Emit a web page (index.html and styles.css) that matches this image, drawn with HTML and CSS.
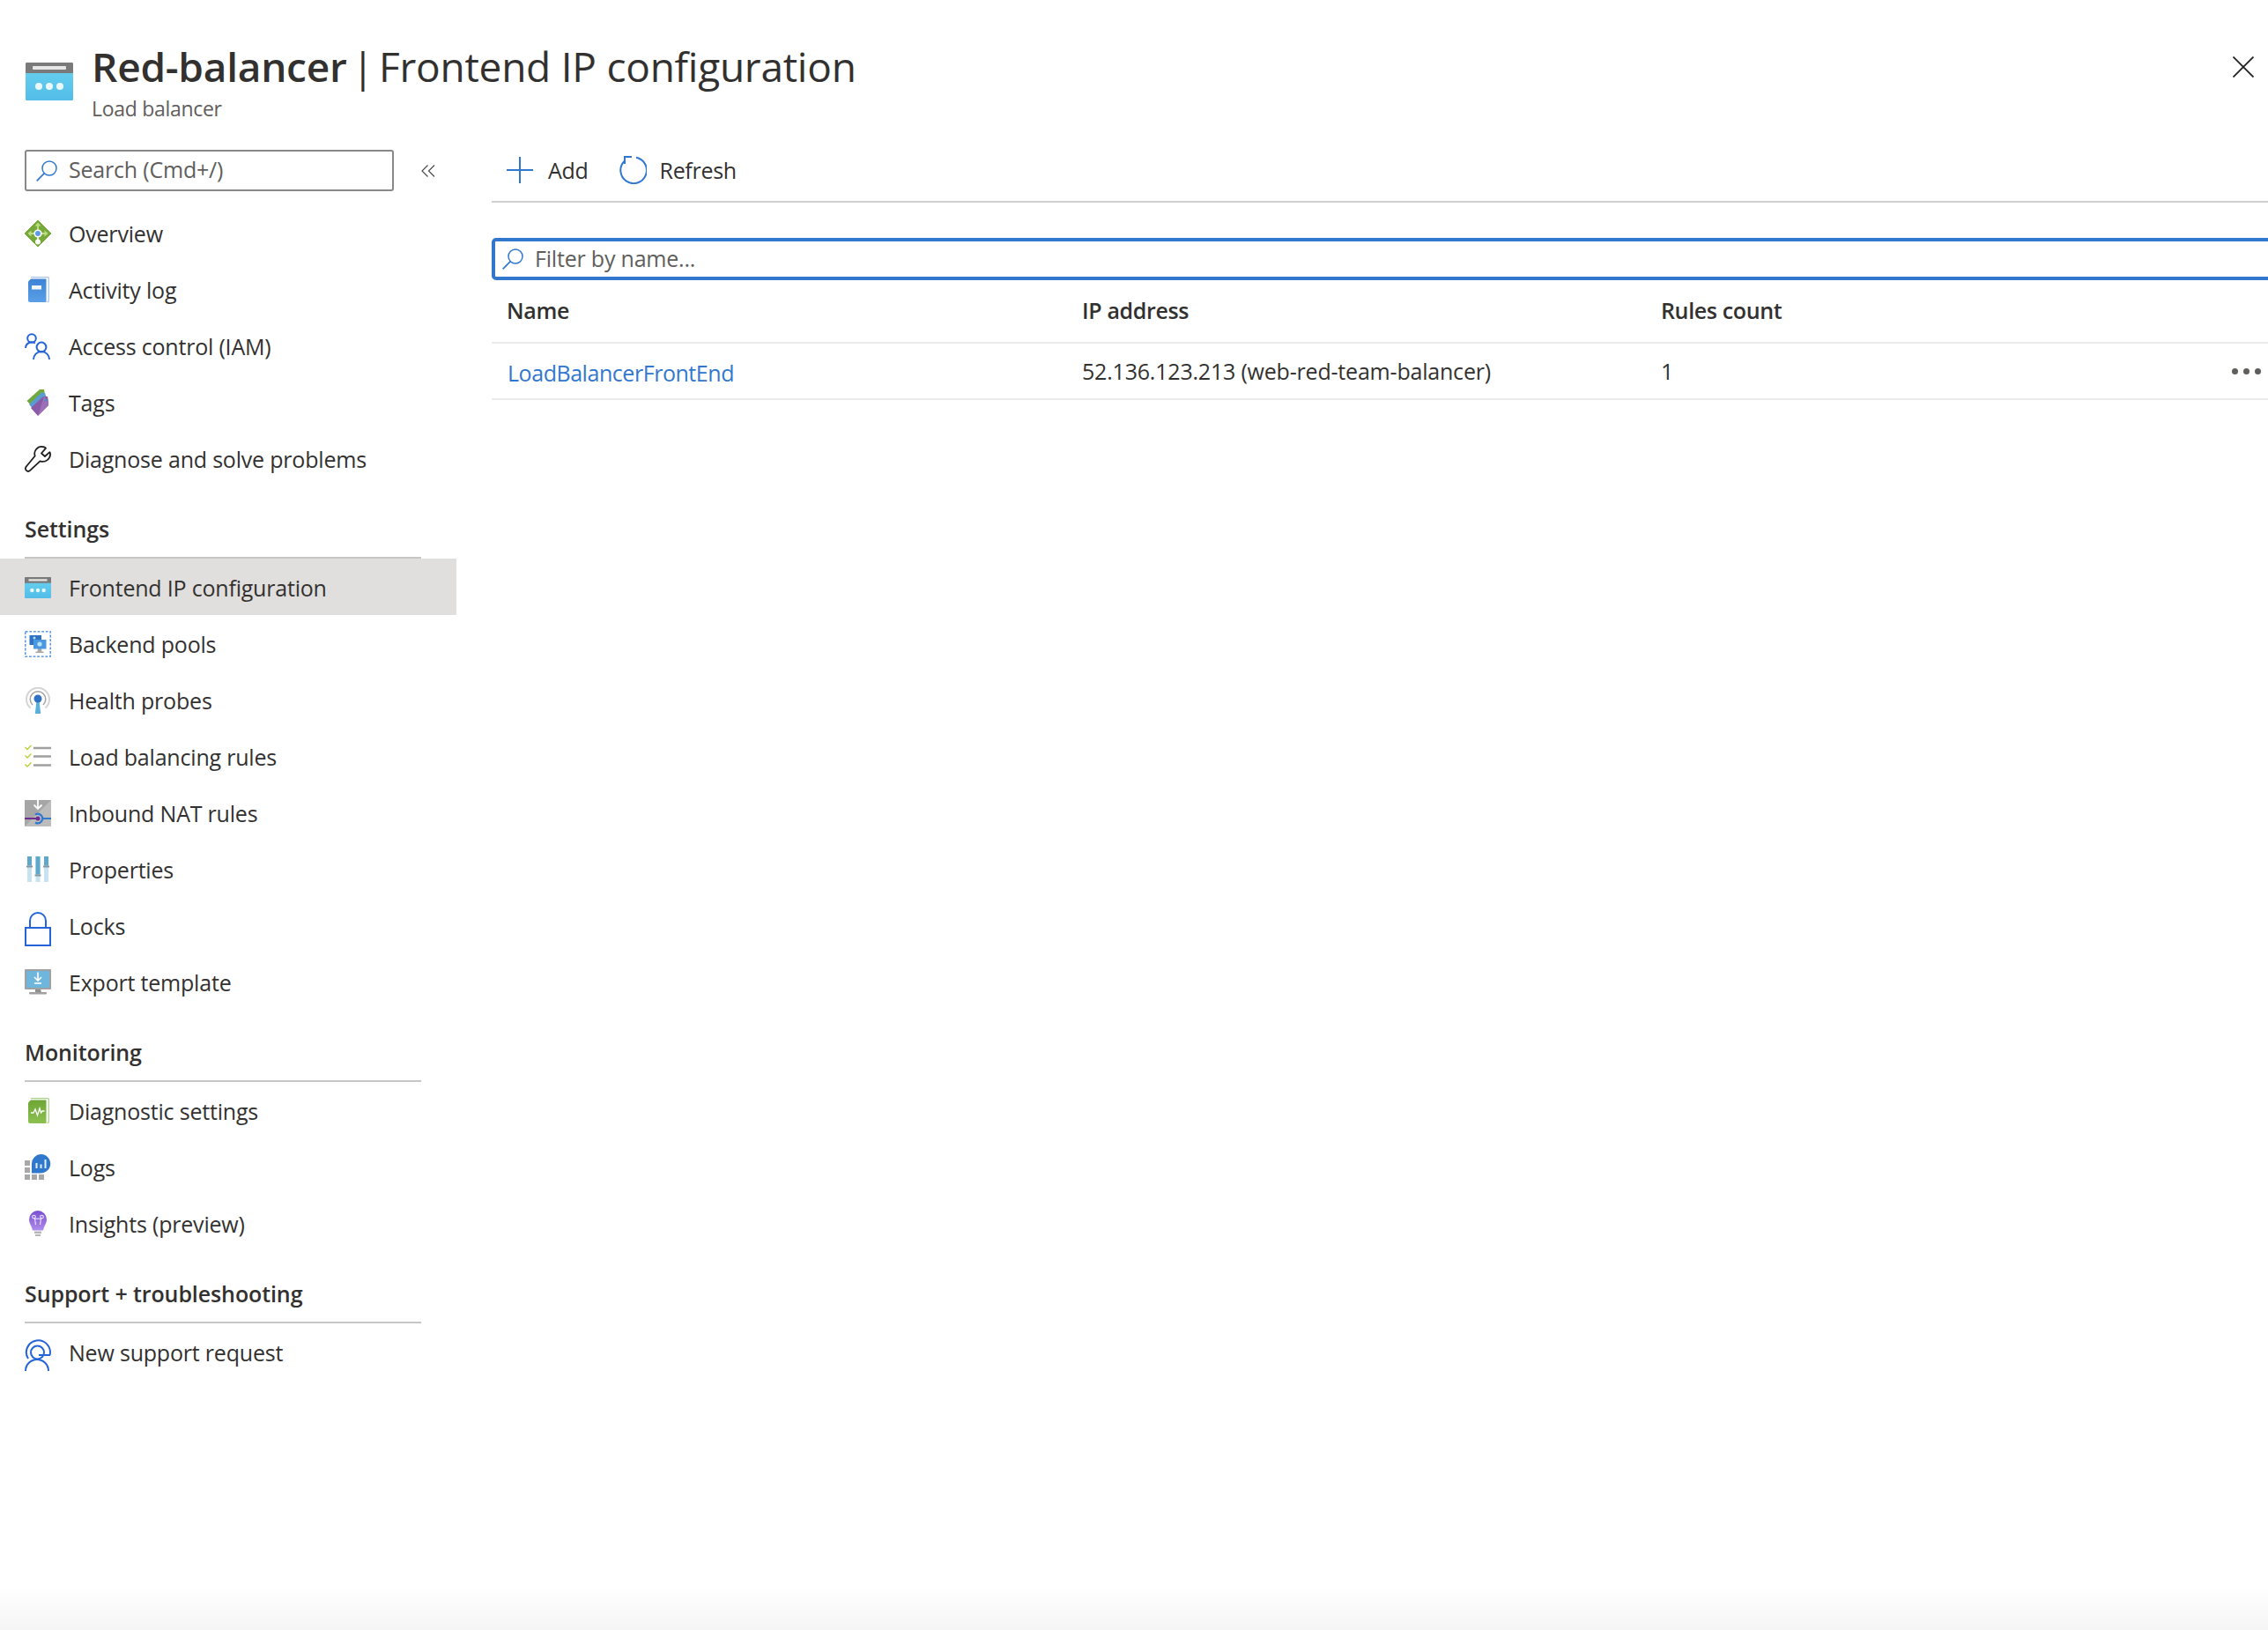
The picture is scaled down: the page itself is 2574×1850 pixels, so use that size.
FILE: index.html
```html
<!DOCTYPE html>
<html lang="en">
<head>
    <meta charset="UTF-8">
    <title>Red-balancer | Frontend IP configuration</title>
    <link rel="stylesheet" href="styles.css">
</head>
<body>
    <svg class="defs" width="0" height="0">
        <defs>
            <linearGradient id="skyGrad" x1="0" y1="0" x2="0" y2="1">
                <stop offset="0" stop-color="#6bd3f0"/>
                <stop offset="1" stop-color="#52bde8"/>
            </linearGradient>
            <linearGradient id="bookGrad" x1="0" y1="0" x2="0" y2="1">
                <stop offset="0" stop-color="#3d83d6"/>
                <stop offset="1" stop-color="#5a9fe6"/>
            </linearGradient>
            <linearGradient id="greenGrad" x1="0" y1="0" x2="0" y2="1">
                <stop offset="0" stop-color="#6ea534"/>
                <stop offset="1" stop-color="#8cc152"/>
            </linearGradient>
            <linearGradient id="bulbGrad" x1="0" y1="0" x2="0" y2="1">
                <stop offset="0" stop-color="#7a4fd0"/>
                <stop offset="1" stop-color="#ae8cec"/>
            </linearGradient>
            <symbol id="lbIcon" viewBox="0 0 54 43">
                <rect width="54" height="43" rx="1.5" fill="url(#skyGrad)"/>
                <path d="M1.5 0h51a1.5 1.5 0 0 1 1.500 1.500V12H0V1.500A1.500 1.500 0 0 1 1.500 0z" fill="#7a7a7a"/>
                <rect x="8" y="4" width="38" height="4" rx="1" fill="#e6e6e6"/>
                <circle cx="15" cy="27" r="4" fill="#e8f8fd"/>
                <circle cx="27" cy="27" r="4" fill="#e8f8fd"/>
                <circle cx="39" cy="27" r="4" fill="#e8f8fd"/>
            </symbol>
            <symbol id="searchIcon" viewBox="0 0 24 24">
                <circle cx="15" cy="9" r="8" fill="none" stroke="#3277ce" stroke-width="1.500"/>
                <path d="M9.300 14.700L.7 23.300" fill="none" stroke="#3277ce" stroke-width="1.700"/>
            </symbol>
        </defs>
    </svg>

    <div class="blade">
        <header class="blade-header">
            <svg class="resource-icon"><use href="#lbIcon"/></svg>
            <div class="blade-titles">
                <h1><strong>Red-balancer</strong> | <span>Frontend IP configuration</span></h1>
                <p>Load balancer</p>
            </div>
            <svg class="close-icon" viewBox="0 0 24 24"><path d="M.5.500l23 23M23.500.500l-23 23" fill="none" stroke="#201f1e" stroke-width="1.800"/></svg>
        </header>

        <div class="blade-body">
            <nav class="sidebar">
                <div class="side-search">
                    <div class="search-box">
                        <svg class="search-icon"><use href="#searchIcon"/></svg>
                        <span>Search (Cmd+/)</span>
                    </div>
                    <svg class="collapse-icon" viewBox="0 0 16 14"><path d="M7.500.500L1 7l6.500 6.500M15 .500L8.500 7l6.500 6.500" fill="none" stroke="#444" stroke-width="1.100"/></svg>
                </div>

                <a class="nav-item" href="#">
                    <svg class="nav-icon" viewBox="0 0 30 30">
                        <path d="M15 0l15 15-15 15L0 15z" fill="#76a83a" stroke="#76a83a" stroke-linejoin="round"/>
                        <path d="M15 2.500l3.500 4h-2.500v5h-2v-5h-2.500zM3.500 15l4-3.500v2.500h5v2h-5v2.500zM26.500 15l-4 3.500v-2.500h-5v-2h5v-2.500z" fill="#bcdc84"/>
                        <path d="M15 19v3" stroke="#fff" stroke-width="1.600"/>
                        <circle cx="15" cy="15" r="4.600" fill="#fff"/>
                        <circle cx="15" cy="15" r="3" fill="#5b9be8"/>
                        <circle cx="15" cy="24.500" r="3" fill="#fff"/>
                    </svg>
                    <span>Overview</span>
                </a>
                <a class="nav-item" href="#">
                    <svg class="nav-icon" viewBox="0 0 30 30">
                        <path d="M7 .7h19.500a.8.800 0 0 1 .8.800v26a.8.800 0 0 1-.8.800h-1" fill="none" stroke="#a9c4e6" stroke-width="1.200"/>
                        <path d="M7 2.500h17.500V29H6a2 2 0 0 1-2-2V5.500z" fill="url(#bookGrad)"/>
                        <rect x="8" y="10" width="11" height="4.500" fill="#f2f7fc"/>
                    </svg>
                    <span>Activity log</span>
                </a>
                <a class="nav-item" href="#">
                    <svg class="nav-icon" viewBox="0 0 30 30">
                        <g fill="none" stroke="#2464d8" stroke-width="2">
                            <circle cx="8" cy="6" r="4.800"/>
                            <path d="M1 17a7 7 0 0 1 11-5.500"/>
                            <circle cx="19" cy="16" r="5.400"/>
                            <path d="M10 30a9 9 0 0 1 18 0"/>
                        </g>
                    </svg>
                    <span>Access control (IAM)</span>
                </a>
                <a class="nav-item" href="#">
                    <svg class="nav-icon" viewBox="0 0 30 30">
                        <path d="M2.500 13L17 0h5l1 6-13 15z" fill="#70a83b"/>
                        <path d="M5 17L19 3.500l4 .5 2 6-13 15z" fill="#5a9bd1"/>
                        <path d="M7 21L21 8l5 0 1 6v4L15 30z" fill="#8a5aa6"/>
                        <path d="M15 30l12-12v-4l-5-6z" fill="#9d6fb8"/>
                        <circle cx="24" cy="12" r="1.500" fill="#3f8fc4"/>
                    </svg>
                    <span>Tags</span>
                </a>
                <a class="nav-item" href="#">
                    <svg class="nav-icon" viewBox="0 0 30 30">
                        <path d="M20 1a8 8 0 0 0-8.300 10.500L1.800 23.500a3 3 0 0 0 4.400 4.400L17.500 17.300A8.500 8.500 0 0 0 29 8.500l-.6-1.300L23 12l-4-3.500 5-5.800-1-.9A8 8 0 0 0 20 1z" fill="none" stroke="#201f1e" stroke-width="1.800" stroke-linejoin="round"/>
                    </svg>
                    <span>Diagnose and solve problems</span>
                </a>

                <h2 class="nav-heading">Settings</h2>
                <a class="nav-item active" href="#">
                    <svg class="nav-icon"><use href="#lbIcon"/></svg>
                    <span>Frontend IP configuration</span>
                </a>
                <a class="nav-item" href="#">
                    <svg class="nav-icon" viewBox="0 0 30 30">
                        <rect x=".8" y=".8" width="28.400" height="28.400" fill="#fff" stroke="#3b82dc" stroke-width="1.300" stroke-dasharray="2.800 1.800"/>
                        <rect x="5.500" y="5" width="13.500" height="11" fill="#2f72c4"/>
                        <path d="M15 20h4l.5 3.500h2V25h-9v-1.500h2z" fill="#a9a9a9"/>
                        <rect x="10" y="10" width="14.500" height="10.500" fill="#4a98e0"/>
                        <circle cx="17" cy="15" r="2.600" fill="#b4e2f7"/>
                        <circle cx="11" cy="8" r="1.500" fill="#a8dcf5"/>
                    </svg>
                    <span>Backend pools</span>
                </a>
                <a class="nav-item" href="#">
                    <svg class="nav-icon" viewBox="0 0 30 30">
                        <path d="M6.500 23.500a13 13 0 1 1 17 0" fill="none" stroke="#d4d4d4" stroke-width="2"/>
                        <path d="M9 20a8.800 8.800 0 1 1 12 0" fill="none" stroke="#a0a0a0" stroke-width="1.500"/>
                        <path d="M13.800 13h2.400l2 17h-6.400z" fill="#5ab0dc"/>
                        <circle cx="15" cy="13" r="4.500" fill="#2f72c4"/>
                    </svg>
                    <span>Health probes</span>
                </a>
                <a class="nav-item" href="#">
                    <svg class="nav-icon" viewBox="0 0 30 30">
                        <path d="M10 5h20M10 14.500h20M10 24.500h20" stroke="#a0a0a0" stroke-width="2.400"/>
                        <path d="M.5 4l2.500 2.500L7.500 2M.5 13.500L3 16l4.500-4.500M.5 23.500L3 26l4.500-4.500" fill="none" stroke="#b4d334" stroke-width="1.400"/>
                    </svg>
                    <span>Load balancing rules</span>
                </a>
                <a class="nav-item" href="#">
                    <svg class="nav-icon" viewBox="0 0 30 30">
                        <rect width="30" height="30" rx="1" fill="#bcbcbc"/>
                        <path d="M0 1a1 1 0 0 1 1-1h29L0 30z" fill="#a6a6a6"/>
                        <path d="M15 0v10M10.500 5.500l4.500 4.500 4.500-4.500" fill="none" stroke="#fff" stroke-width="1.800"/>
                        <path d="M0 21h15" stroke="#6f2f8f" stroke-width="2"/>
                        <path d="M20 21h10" stroke="#2f7ad0" stroke-width="2"/>
                        <path d="M12 16.500a5.300 5.300 0 1 1 0 9" fill="none" stroke="#2f7ad0" stroke-width="2.200"/>
                        <circle cx="15" cy="21" r="2.500" fill="#6f2f8f"/>
                    </svg>
                    <span>Inbound NAT rules</span>
                </a>
                <a class="nav-item" href="#">
                    <svg class="nav-icon" viewBox="0 0 30 30">
                        <path d="M3 0h5v29H3zM12.500 0h5v29h-5zM22 0h5v29h-5z" fill="#c8e3f0"/>
                        <path d="M3 0h5v10.500H3zM12.500 0h5v20.500h-5zM22 0h5v10.500h-5z" fill="#5fa8cc"/>
                        <path d="M2 10.500h7v2H2zM11.500 20.500h7v2h-7zM21 10.500h7v2h-7z" fill="#8697a2"/>
                    </svg>
                    <span>Properties</span>
                </a>
                <a class="nav-item" href="#">
                    <svg class="nav-icon tall" viewBox="0 0 30 40">
                        <rect x="1" y="19" width="28" height="20" fill="#fff" stroke="#2464d8" stroke-width="2"/>
                        <path d="M6 19V11a9 9 0 0 1 18 0v8" fill="none" stroke="#2464d8" stroke-width="2"/>
                    </svg>
                    <span>Locks</span>
                </a>
                <a class="nav-item" href="#">
                    <svg class="nav-icon" viewBox="0 0 30 30">
                        <rect width="30" height="23" rx="1" fill="#a0a0a0"/>
                        <rect x="2" y="2" width="26" height="19" fill="#6fb6dc"/>
                        <path d="M15 3.500v9M11 9l4 4 4-4" fill="none" stroke="#fff" stroke-width="1.600"/>
                        <path d="M11 16h8" stroke="#fff" stroke-width="1.600"/>
                        <path d="M12 23h6l1 3h-7z" fill="#8f8f8f"/>
                        <rect x="5" y="26" width="20" height="2.500" rx="1" fill="#a0a0a0"/>
                    </svg>
                    <span>Export template</span>
                </a>

                <h2 class="nav-heading">Monitoring</h2>
                <a class="nav-item" href="#">
                    <svg class="nav-icon" viewBox="0 0 30 30">
                        <path d="M7 .7h19.500a.8.800 0 0 1 .8.800v26a.8.800 0 0 1-.8.800h-1" fill="none" stroke="#a8cf86" stroke-width="1.200"/>
                        <path d="M7 2.500h17.500V29H6a2 2 0 0 1-2-2V5.500z" fill="url(#greenGrad)"/>
                        <path d="M7 17h3l2-4 2.500 7 2.500-8 1.500 5 1.500-2h2.500" fill="none" stroke="#fff" stroke-width="1.300"/>
                    </svg>
                    <span>Diagnostic settings</span>
                </a>
                <a class="nav-item" href="#">
                    <svg class="nav-icon" viewBox="0 0 30 30">
                        <path d="M0 7h6v6H0zM0 15h6v6H0zM0 23h6v6H0zM8 23h6v6H8zM16 23h6v6h-6z" fill="#a8a8a8"/>
                        <path d="M18.500 0a10.700 10.700 0 0 1 0 21.400H8V10.700A10.700 10.700 0 0 1 18.500 0z" fill="#2f78cc"/>
                        <path d="M12.500 10h2v6h-2zM17.500 11.500h2v4.500h-2zM22.500 6h2v10h-2z" fill="#e4f0fa"/>
                    </svg>
                    <span>Logs</span>
                </a>
                <a class="nav-item" href="#">
                    <svg class="nav-icon" viewBox="0 0 30 30">
                        <path d="M15 0a10 10 0 0 1 10 10c0 5-3 7-4 12.500H9C8 17 5 15 5 10A10 10 0 0 1 15 0z" fill="url(#bulbGrad)"/>
                        <path d="M11 23.500h8v2.500h-8zM12 27h6v2h-6z" fill="#b5b5b5"/>
                        <g fill="none" stroke="#f0e8ff" stroke-width="1.100">
                            <circle cx="10.500" cy="7" r="1.800"/>
                            <circle cx="19.500" cy="7" r="1.800"/>
                            <path d="M11.500 9l1 7M18.500 9l-1 7M10.500 9.300h9"/>
                        </g>
                    </svg>
                    <span>Insights (preview)</span>
                </a>

                <h2 class="nav-heading">Support + troubleshooting</h2>
                <a class="nav-item" href="#">
                    <svg class="nav-icon support" viewBox="0 0 30 36">
                        <g fill="none" stroke="#2464d8" stroke-width="2">
                            <path d="M4 22A13.500 13.500 0 1 1 28.500 18"/>
                            <circle cx="14.500" cy="15" r="7.500"/>
                            <path d="M16 18h13"/>
                            <path d="M1 36a13 13 0 0 1 26 0"/>
                        </g>
                    </svg>
                    <span>New support request</span>
                </a>
            </nav>

            <main class="content">
                <div class="toolbar">
                    <button class="tool-btn">
                        <svg class="plus-icon" viewBox="0 0 30 30"><path d="M15 0v30M0 15h30" stroke="#3277ce" stroke-width="2"/></svg>
                        <span>Add</span>
                    </button>
                    <button class="tool-btn">
                        <svg class="refresh-icon" viewBox="0 0 32 32"><path d="M6.500 6a14.800 14.800 0 1 0 13.500-4.200" fill="none" stroke="#3277ce" stroke-width="2"/><path d="M15 1H7v8" stroke="#3277ce" stroke-width="2" fill="none"/></svg>
                        <span>Refresh</span>
                    </button>
                </div>

                <div class="filter-box">
                    <svg class="search-icon"><use href="#searchIcon"/></svg>
                    <span>Filter by name...</span>
                </div>

                <table class="grid">
                    <thead>
                        <tr><th>Name</th><th>IP address</th><th>Rules count</th><th></th></tr>
                    </thead>
                    <tbody>
                        <tr>
                            <td><a href="#">LoadBalancerFrontEnd</a></td>
                            <td>52.136.123.213 (web-red-team-balancer)</td>
                            <td>1</td>
                            <td class="more-cell"><span class="more"><i></i><i></i><i></i></span></td>
                        </tr>
                    </tbody>
                </table>
            </main>
        </div>
    </div>
    <div class="bottom-fade"></div>
</body>
</html>
```

FILE: styles.css
```css
* { box-sizing: border-box; }
html, body { height: 100%; }
body {
    margin: 0;
    background: #fff;
    color: #323130;
    font-family: "Open Sans", "Noto Sans", sans-serif;
    font-size: 25px;
    letter-spacing: -0.2px;
    overflow: hidden;
    display: flex;
    flex-direction: column;
}
.defs { position: absolute; }
.blade { flex: 1; min-height: 0; }
.bottom-fade {
    height: 50px;
    background: linear-gradient(#ffffff, #f5f5f5);
}

/* header */
.blade-header {
    display: flex;
    align-items: flex-start;
    height: 170px;
    padding: 46px 16px 0 29px;
}
.resource-icon {
    width: 54px;
    height: 43px;
    margin: 25px 21px 0 0;
}
.blade-titles { flex: 1; }
.blade-titles h1 {
    margin: 0;
    font-size: 46px;
    line-height: 58px;
    font-weight: 400;
    letter-spacing: -0.25px;
    word-spacing: -6px;
}
.blade-titles h1 span { word-spacing: 0; }
.blade-titles h1 strong { font-weight: 600; }
.blade-titles p {
    margin: 3px 0 0;
    color: #605e5c;
    font-size: 23px;
    line-height: 32px;
    letter-spacing: -0.3px;
}
.close-icon {
    width: 24px;
    height: 24px;
    margin-top: 18px;
}

/* layout */
.blade-body {
    display: flex;
    align-items: flex-start;
}
.sidebar {
    width: 518px;
    flex-shrink: 0;
}
.side-search {
    display: flex;
    align-items: center;
    height: 47px;
    margin-bottom: 15px;
    padding-left: 28px;
}
.search-box {
    display: flex;
    align-items: center;
    width: 419px;
    height: 47px;
    padding: 0 0 3px 11px;
    border: 2px solid #8a8886;
    border-radius: 3px;
    color: #605e5c;
}
.search-icon {
    width: 24px;
    height: 24px;
    margin: 3px 13px 0 0;
}
.collapse-icon {
    width: 16px;
    height: 14px;
    margin-left: 31px;
}
.nav-item {
    display: flex;
    align-items: center;
    height: 64px;
    padding: 2px 0 0 28px;
    color: #323130;
    text-decoration: none;
}
.nav-item.active { background: #e1dfdd; }
.nav-icon {
    width: 30px;
    height: 30px;
    margin-right: 20px;
    flex-shrink: 0;
}
.nav-icon.tall { height: 40px; margin-top: 5px; }
.nav-icon.support { height: 36px; margin-top: 5px; }
.nav-heading {
    width: 450px;
    height: 82px;
    margin: 0 0 0 28px;
    padding-top: 32px;
    border-bottom: 2px solid #c8c6c4;
    font-size: 25px;
    line-height: 32px;
    font-weight: 600;
    letter-spacing: -0.1px;
}

/* toolbar */
.content {
    flex: 1;
    min-width: 0;
    padding-left: 40px;
}
.toolbar {
    display: flex;
    align-items: center;
    height: 60px;
    border-bottom: 2px solid #d2d0ce;
    padding-bottom: 12px;
    gap: 34px;
}
.tool-btn {
    display: flex;
    align-items: center;
    padding: 0;
    border: 0;
    background: none;
    color: #323130;
    font: inherit;
    letter-spacing: inherit;
}
.plus-icon {
    width: 30px;
    height: 30px;
    margin: 0 17px;
}
.refresh-icon {
    width: 32px;
    height: 32px;
    margin-right: 15px;
}
.tool-btn span { letter-spacing: -0.3px; }

.filter-box {
    display: flex;
    align-items: center;
    height: 48px;
    margin: 40px -20px 0 0;
    padding: 0 0 3px 8px;
    border: 4px solid #3277ce;
    border-radius: 5px;
    color: #605e5c;
}

/* table */
.grid {
    width: 100%;
    border-collapse: collapse;
    table-layout: fixed;
}
.grid th, .grid td {
    padding: 0 0 0 17px;
    text-align: left;
    border-bottom: 2px solid #edebe9;
}
.grid th {
    height: 71px;
    padding-bottom: 2px;
    font-weight: 600;
    letter-spacing: -0.35px;
}
.grid td { height: 64px; }
.grid th:nth-child(1) { width: 653px; }
.grid th:nth-child(2) { width: 657px; }
.grid th:nth-child(3) { width: 600px; }
.grid a {
    display: inline-block;
    padding: 4px 0 0 1px;
    color: #3277ce;
    text-decoration: none;
    letter-spacing: -0.45px;
}
.more-cell { text-align: right; }
.more {
    display: flex;
    justify-content: flex-end;
    gap: 6px;
    padding-right: 8px;
}
.more i {
    width: 7px;
    height: 7px;
    border-radius: 50%;
    background: #605e5c;
}
```
